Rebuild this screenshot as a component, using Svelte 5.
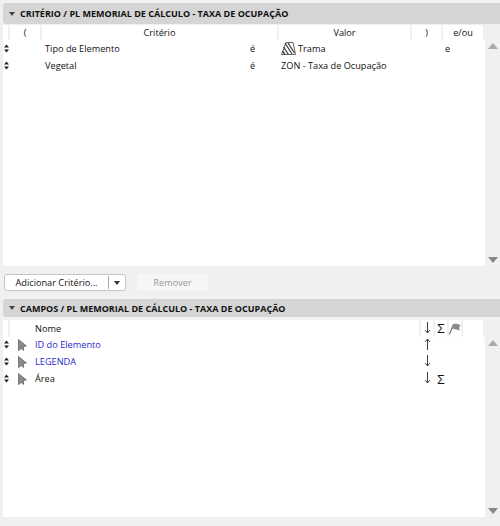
<script>
  const criteria = [
    { name: 'Tipo de Elemento', op: 'é', value: 'Trama', hatch: true, join: 'e' },
    { name: 'Vegetal', op: 'é', value: 'ZON - Taxa de Ocupação', hatch: false, join: '' }
  ];
  const fields = [
    { name: 'ID do Elemento', blue: true, arrow: 'up', sum: false },
    { name: 'LEGENDA', blue: true, arrow: 'down', sum: false },
    { name: 'Área', blue: false, arrow: 'down', sum: true }
  ];
</script>

{#snippet grip()}
  <svg class="grip" width="5" height="9" viewBox="0 0 5 9"><path d="M2.5 0.5 L5 3.5 H0 Z M0 5.5 H5 L2.5 8.5 Z" fill="#222" /></svg>
{/snippet}

{#snippet arrow(dir)}
  <svg class="arrow" width="7" height="13" viewBox="0 0 7 13">
    {#if dir === 'up'}
      <path d="M3.5 1 V12 M1.2 3.8 L3.5 1 L5.8 3.8" fill="none" stroke="#3a3f45" />
    {:else}
      <path d="M3.5 0 V11 M1.2 8.2 L3.5 11 L5.8 8.2" fill="none" stroke="#3a3f45" />
    {/if}
  </svg>
{/snippet}

{#snippet scrollbar()}
  <div class="scroll">
    <span class="tri up"></span>
    <span class="tri down"></span>
  </div>
{/snippet}

<div class="page">
  <div class="section-head">
    <span class="caret"></span>
    <span>CRITÉRIO / PL MEMORIAL DE CÁLCULO - TAXA DE OCUPAÇÃO</span>
  </div>

  <div class="table crit">
    <div class="head">
      <span class="hc c-grip"></span>
      <span class="hc c-paren">(</span>
      <span class="hc c-name">Critério</span>
      <span class="hc c-val">Valor</span>
      <span class="hc c-close">)</span>
      <span class="hc c-join">e/ou</span>
    </div>
    <div class="body">
      <div class="rows">
        {#each criteria as c}
          <div class="row">
            <span class="cell-grip">{@render grip()}</span>
            <span class="cell-name">{c.name}</span>
            <span class="cell-op">{c.op}</span>
            <span class="cell-val">
              {#if c.hatch}
                <svg class="hatch" width="15" height="13" viewBox="0 0 15 13">
                  <path d="M0.5 12.5 L5 0.5 H12 L14.5 12.5 Z" fill="#fff" stroke="#666" />
                  <path d="M4 1 L11 12 M7 1 L13.5 11 M2.5 5 L7.5 12.5 M1.5 9 L4 12.5" stroke="#3f3f3f" stroke-width="1.3" fill="none" />
                </svg>
              {/if}
              {c.value}
            </span>
            <span class="cell-join">{c.join}</span>
          </div>
        {/each}
      </div>
      {@render scrollbar()}
    </div>
  </div>

  <div class="actions">
    <div class="split">
      <span class="split-label">Adicionar Critério...</span>
      <span class="split-div"></span>
      <span class="split-caret"></span>
    </div>
    <div class="btn-off">Remover</div>
  </div>

  <div class="section-head second">
    <span class="caret"></span>
    <span>CAMPOS / PL MEMORIAL DE CÁLCULO - TAXA DE OCUPAÇÃO</span>
  </div>

  <div class="table fields">
    <div class="head">
      <span class="hc f-grip"></span>
      <span class="hc f-name">Nome</span>
      <span class="hc f-ic">{@render arrow('down')}</span>
      <span class="hc f-ic sum">Σ</span>
      <span class="hc f-ic">
        <svg width="12" height="12" viewBox="0 0 12 12">
          <path d="M0.5 11.5 L4 2" stroke="#555" fill="none" />
          <path d="M4 1 L7 0.5 L11.5 2 L10 5 L11 7.5 L7 6.5 L2.8 5.5 Z" fill="#8c8c8c" />
        </svg>
      </span>
      <span class="hc f-rest"></span>
    </div>
    <div class="body">
      <div class="rows">
        {#each fields as f}
          <div class="row frow">
            <span class="cell-grip">{@render grip()}</span>
            <span class="cell-ptr">
              <svg width="9" height="12" viewBox="0 0 9 12"><path d="M0.5 0.5 L8.5 7 L5.5 7.5 L5.5 11.5 L3.5 9.5 L0.5 11.5 Z" fill="#8a8a8a" stroke="#5c5c5c" stroke-width="0.7" /></svg>
            </span>
            <span class="cell-fname" class:blue={f.blue}>{f.name}</span>
            <span class="cell-ic">{@render arrow(f.arrow)}</span>
            <span class="cell-ic sum">{f.sum ? 'Σ' : ''}</span>
          </div>
        {/each}
      </div>
      {@render scrollbar()}
    </div>
  </div>
</div>

<style>
  :global(body) { margin: 0; background: #f0f0f0; }

  .page {
    width: 500px;
    height: 526px;
    box-sizing: border-box;
    padding: 3px 0 0 3px;
    font-family: "Open Sans", "Noto Sans", sans-serif;
    font-size: 9.2px;
    color: #111;
    overflow: hidden;
    background: #f0f0f0;
  }

  .section-head {
    height: 21px;
    background: #d5d5d5;
    border-radius: 3px 0 0 3px;
    display: flex;
    align-items: center;
    gap: 5px;
    padding-left: 3px;
    font-size: 9px;
    font-weight: 700;
    color: #111;
  }
  .section-head.second { height: 18px; }
  .caret {
    width: 0; height: 0;
    margin-left: 3px;
    border-left: 3px solid transparent;
    border-right: 3px solid transparent;
    border-top: 4px solid #444;
  }

  .table { margin-top: 1px; display: flex; flex-direction: column; }
  .crit { height: 241px; }
  .fields { margin-top: 3px; height: 197px; }

  .head { display: flex; height: 15px; flex: none; width: 480px; }
  .fields .head { height: 17px; }
  .hc {
    background: #fff;
    border-right: 2px solid #f0f0f0;
    text-align: center;
    line-height: 15px;
    box-sizing: border-box;
    display: flex;
    align-items: center;
    justify-content: center;
  }
  .c-grip { width: 7px; }
  .c-paren { width: 32px; }
  .c-name { width: 237px; }
  .c-val { width: 133px; }
  .c-close { width: 31px; }
  .c-join { width: 40px; border-right: 0; }

  .f-grip { width: 7px; }
  .f-name { width: 413px; justify-content: flex-start; padding-left: 25px; }
  .f-ic { width: 14px; }
  .f-ic.sum { font-size: 13px; }
  .f-rest { width: 20px; flex: none; border-right: 0; }

  .body { flex: 1; display: flex; min-height: 0; }
  .rows { width: 482px; background: #fff; flex: none; }

  .scroll {
    width: 15px;
    display: flex;
    flex-direction: column;
    justify-content: space-between;
    align-items: center;
    padding: 3px 0 3px;
  }
  .tri { width: 0; height: 0; border-left: 5px solid transparent; border-right: 5px solid transparent; }
  .tri.up { border-bottom: 6px solid #aaa; }
  .tri.down { border-top: 6px solid #888; }

  .row { display: flex; align-items: center; height: 17px; }
  .cell-grip { width: 7px; display: flex; align-items: center; justify-content: center; flex: none; }
  .grip { display: block; flex: none; }
  .cell-name { margin-left: 35px; width: 205px; }
  .cell-op { width: 31px; }
  .cell-val { width: 164px; display: flex; align-items: center; gap: 2px; }
  .hatch { flex: none; }
  .cell-join { padding-left: 0; }

  .frow { height: 17px; margin-top: -1px; margin-bottom: 1px; }
  .cell-ptr { width: 9px; margin-left: 8px; display: flex; flex: none; }
  .cell-fname { margin-left: 8px; width: 385px; }
  .cell-fname.blue { color: #2a1fd0; }
  .cell-ic { width: 14px; display: flex; justify-content: center; align-items: center; flex: none; }
  .cell-ic.sum { font-size: 13px; }

  .actions { display: flex; align-items: center; gap: 11px; height: 33px; padding-left: 1px; }
  .split {
    display: flex;
    align-items: center;
    height: 17px;
    width: 122px;
    box-sizing: border-box;
    background: #fff;
    border: 1px solid #c4c4c4;
    border-radius: 3px;
  }
  .split-label { width: 103px; text-align: center; }
  .split-div { width: 1px; height: 13px; background: #aaa; }
  .split-caret {
    width: 0; height: 0;
    margin-left: 5px;
    border-left: 3.5px solid transparent;
    border-right: 3.5px solid transparent;
    border-top: 4px solid #333;
  }
  .btn-off {
    width: 71px;
    height: 17px;
    line-height: 17px;
    text-align: center;
    background: #f6f6f6;
    border-radius: 3px;
    color: #999;
  }
</style>
